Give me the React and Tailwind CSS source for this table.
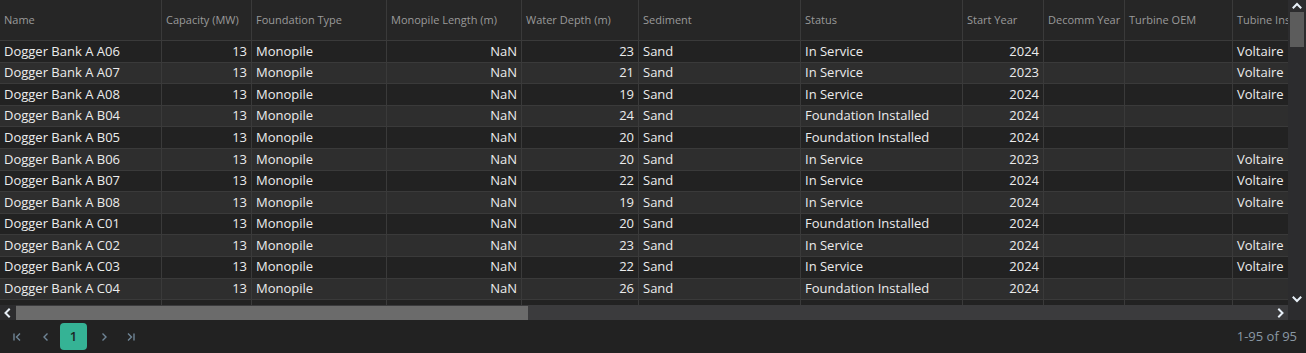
import React from 'react';

const columns = [
  { key: 'name', label: 'Name', w: 162 },
  { key: 'cap', label: 'Capacity (MW)', w: 90, right: true },
  { key: 'found', label: 'Foundation Type', w: 135 },
  { key: 'mono', label: 'Monopile Length (m)', w: 135, right: true },
  { key: 'depth', label: 'Water Depth (m)', w: 117, right: true },
  { key: 'sed', label: 'Sediment', w: 162 },
  { key: 'status', label: 'Status', w: 162 },
  { key: 'start', label: 'Start Year', w: 81, right: true },
  { key: 'decomm', label: 'Decomm Year', w: 81, right: true },
  { key: 'oem', label: 'Turbine OEM', w: 108 },
  { key: 'inst', label: 'Tubine Installer', w: 120 },
];

const raw = [
  ['A06', 23, 'In Service', 2024, 'Voltaire'],
  ['A07', 21, 'In Service', 2023, 'Voltaire'],
  ['A08', 19, 'In Service', 2024, 'Voltaire'],
  ['B04', 24, 'Foundation Installed', 2024, ''],
  ['B05', 20, 'Foundation Installed', 2024, ''],
  ['B06', 20, 'In Service', 2023, 'Voltaire'],
  ['B07', 22, 'In Service', 2024, 'Voltaire'],
  ['B08', 19, 'In Service', 2024, 'Voltaire'],
  ['C01', 20, 'Foundation Installed', 2024, ''],
  ['C02', 23, 'In Service', 2024, 'Voltaire'],
  ['C03', 22, 'In Service', 2024, 'Voltaire'],
  ['C04', 26, 'Foundation Installed', 2024, ''],
  ['C05', 21, 'In Service', 2024, 'Voltaire'],
];

const rows = raw.map(([id, depth, status, start, inst]) => ({
  name: `Dogger Bank A ${id}`,
  cap: 13,
  found: 'Monopile',
  mono: 'NaN',
  depth,
  sed: 'Sand',
  status,
  start,
  decomm: '',
  oem: '',
  inst,
}));

const Chevron = ({ dir, className }) => {
  const d = {
    left: 'M6 1.5 L2.5 5 L6 8.5',
    right: 'M3 1.5 L6.5 5 L3 8.5',
    up: 'M1.5 6.5 L5 3 L8.5 6.5',
    down: 'M1.5 3.5 L5 7 L8.5 3.5',
  }[dir];
  return (
    <svg width="10" height="10" viewBox="0 0 10 10" className={className}>
      <path d={d} fill="none" stroke="currentColor" strokeWidth="2" strokeLinecap="square" />
    </svg>
  );
};

const PageIcon = ({ type }) => (
  <svg width="12" height="12" viewBox="0 0 12 12" className="text-[#6f8596]">
    {type === 'first' && (
      <>
        <path d="M3 2.5 V9.5" stroke="currentColor" strokeWidth="1.4" />
        <path d="M9 2.5 L5.5 6 L9 9.5" fill="none" stroke="currentColor" strokeWidth="1.4" />
      </>
    )}
    {type === 'prev' && <path d="M7.5 2.5 L4 6 L7.5 9.5" fill="none" stroke="currentColor" strokeWidth="1.4" />}
    {type === 'next' && <path d="M4.5 2.5 L8 6 L4.5 9.5" fill="none" stroke="currentColor" strokeWidth="1.4" />}
    {type === 'last' && (
      <>
        <path d="M3 2.5 L6.5 6 L3 9.5" fill="none" stroke="currentColor" strokeWidth="1.4" />
        <path d="M9 2.5 V9.5" stroke="currentColor" strokeWidth="1.4" />
      </>
    )}
  </svg>
);

export default function App() {
  return (
    <div className="w-[1306px] h-[353px] bg-[#222222] flex flex-col overflow-hidden font-['Open_Sans',sans-serif]">
      <div className="flex h-[320px]">
        <div className="flex-1 min-w-0 flex flex-col">
          {/* grid */}
          <div className="h-[305px] overflow-hidden">
            <div className="w-max">
              <div className="flex h-[41px] bg-[#262626] border-b border-[#3a3a3a]">
                {columns.map((c) => (
                  <div
                    key={c.key}
                    style={{ width: c.w }}
                    className="shrink-0 border-r border-[#3a3a3a] flex items-center px-[4px] text-[11px] text-[#9a9a9a] whitespace-nowrap overflow-hidden"
                  >
                    {c.label}
                  </div>
                ))}
              </div>
              {rows.map((r, i) => (
                <div
                  key={r.name}
                  className={`flex h-[21.6px] border-b border-[#3a3a3a] ${i % 2 ? 'bg-[#2e2e2e]' : 'bg-[#222222]'}`}
                >
                  {columns.map((c) => (
                    <div
                      key={c.key}
                      style={{ width: c.w }}
                      className={`shrink-0 border-r border-[#3a3a3a] flex items-center px-[4px] text-[13px] text-[#ececec] whitespace-nowrap overflow-hidden ${c.right ? 'justify-end' : ''}`}
                    >
                      {r[c.key]}
                    </div>
                  ))}
                </div>
              ))}
            </div>
          </div>
          {/* horizontal scrollbar */}
          <div className="h-[15px] flex bg-[#3b3b3d]">
            <div className="w-[16px] bg-[#2c2c2e] flex items-center justify-center text-[#e8f0f8]">
              <Chevron dir="left" />
            </div>
            <div className="w-[512px] mt-[1px] bg-[#6b6b6b]" />
            <div className="flex-1" />
            <div className="w-[14px] flex items-center justify-center text-[#e8f0f8]">
              <Chevron dir="right" />
            </div>
          </div>
        </div>
        {/* vertical scrollbar */}
        <div className="w-[18px] flex flex-col bg-[#2c2c2e]">
          <div className="h-[12px] flex items-center justify-center text-[#e8f0f8]">
            <Chevron dir="up" />
          </div>
          <div className="mx-[2px] h-[35px] bg-[#5c5c5c]" />
          <div className="flex-1" />
          <div className="h-[12px] mb-[15px] flex items-center justify-center text-[#e8f0f8]">
            <Chevron dir="down" />
          </div>
        </div>
      </div>
      {/* pagination */}
      <div className="flex-1 flex items-center pl-[10px] pr-[9px]">
        <div className="flex items-center">
          <div className="w-[14px] flex justify-center"><PageIcon type="first" /></div>
          <div className="w-[14px] ml-[15px] flex justify-center"><PageIcon type="prev" /></div>
          <div className="w-[27px] h-[27px] ml-[7px] rounded-[4px] bg-[#35b395] flex items-center justify-center text-[13px] font-semibold text-[#1c2624]">
            1
          </div>
          <div className="w-[14px] ml-[10px] flex justify-center"><PageIcon type="next" /></div>
          <div className="w-[14px] ml-[13px] flex justify-center"><PageIcon type="last" /></div>
        </div>
        <div className="ml-auto text-[13px] text-[#8a98a4]">1-95 of 95</div>
      </div>
    </div>
  );
}
